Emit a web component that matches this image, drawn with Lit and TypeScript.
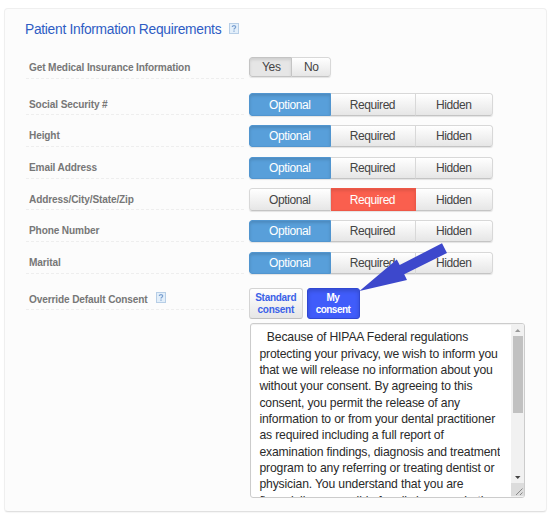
import { LitElement, html, css } from "lit";
import { customElement, property } from "lit/decorators.js";

@customElement("help-badge")
class HelpBadge extends LitElement {
  static styles = css`
    :host { display: block; width: 10px; height: 11px; }
    svg { display: block; }
  `;
  render() {
    return html`<svg width="10" height="11" viewBox="0 0 10 11">
      <rect x=".5" y=".5" width="9" height="10" fill="#e3effa" stroke="#b7cee6"/>
      <path d="M3.3 4.1C3.3 2.2 6.7 2.2 6.7 4.1C6.7 5.2 5 5.1 5 6.5M5 7.5V8.7" fill="none" stroke="#7a9fd0" stroke-width="1.2"/>
    </svg>`;
  }
}

@customElement("choice-group")
class ChoiceGroup extends LitElement {
  @property({ attribute: false }) options: string[] = [];
  @property() selected = "";
  @property() tone = "blue";
  static styles = css`
    :host { display: block; }
    .group {
      display: grid; grid-template-columns: 81.5px 85px 77.5px; width: 244px; height: 22.5px;
      box-sizing: border-box; border-radius: 3px; overflow: hidden;
      box-shadow: 0 1px 1px rgba(0,0,0,.1);
    }
    .group.two { grid-template-columns: 42.5px 39.5px; width: 82px; height: 19.5px; }
    .opt {
      box-sizing: border-box; border: 1px solid #d8d8d8; border-bottom-color: #c4c4c4; border-left-width: 0;
      display: flex; align-items: center; justify-content: center; padding: 0;
      font: 12px "Liberation Sans", Arial, sans-serif; letter-spacing: -.43px; color: #444;
      background: linear-gradient(#fff, #e6e6e6);
    }
    .opt:first-child { border-left-width: 1px; border-radius: 3px 0 0 3px; }
    .opt:last-child { border-radius: 0 3px 3px 0; }
    .two .opt { padding-left: 1px; letter-spacing: -.3px; }
    .two .opt:first-child { padding-left: 2px; }
    .blue { background: #589fda; color: #fff; border-color: #5195cf; box-shadow: inset 0 2px 3px rgba(0,0,0,.13); }
    .red { background: #fa5f4e; color: #fff; border-color: #ee5746; box-shadow: inset 0 2px 3px rgba(0,0,0,.1); }
    .grey { background: #e6e6e6; border-color: #c4c4c4; box-shadow: inset 0 2px 3px rgba(0,0,0,.1); }
  `;
  render() {
    return html`<div class="group ${this.options.length === 2 ? "two" : ""}">
      ${this.options.map((o) => html`<button class="opt ${o === this.selected ? this.tone : ""}">${o}</button>`)}
    </div>`;
  }
}

const LEVELS = ["Optional", "Required", "Hidden"];
const FIELDS = [
  { label: "Social Security #", selected: "Optional", tone: "blue" },
  { label: "Height", selected: "Optional", tone: "blue" },
  { label: "Email Address", selected: "Optional", tone: "blue" },
  { label: "Address/City/State/Zip", selected: "Required", tone: "red" },
  { label: "Phone Number", selected: "Optional", tone: "blue" },
  { label: "Marital", selected: "Optional", tone: "blue" },
];
const CONSENT = [
  "\u00a0 Because of HIPAA Federal regulations",
  "protecting your privacy, we wish to inform you",
  "that we will release no information about you",
  "without your consent. By agreeing to this",
  "consent, you permit the release of any",
  "information to or from your dental practitioner",
  "as required including a full report of",
  "examination findings, diagnosis and treatment",
  "program to any referring or treating dentist or",
  "physician. You understand that you are",
  "financially responsible for all charges whether",
];

@customElement("app-root")
class AppRoot extends LitElement {
  static styles = css`
    :host {
      display: block; position: relative; box-sizing: border-box; width: 556px; height: 519px;
      padding: 8px 0 0 4px; background: #fff; overflow: hidden;
      font-family: "Liberation Sans", Arial, sans-serif;
    }
    .card {
      box-sizing: border-box; width: 543px; height: 504px; background: #fcfcfc;
      border: 1px solid #efefef; border-bottom-color: #e0e0e0; border-radius: 4px;
      padding: 12px 0 0 21px; box-shadow: 0 1px 1px rgba(0,0,0,.04);
    }
    .title { display: flex; gap: 8px; height: 17px; margin: 0 0 19px; align-items: center; }
    .title help-badge { margin-bottom: 2px; }
    h1 {
      margin: 1px 0 0 -1px; font-size: 13.8px; letter-spacing: -.29px; line-height: 16px; font-weight: 400;
      color: #2f5cc4; white-space: nowrap;
    }
    .row { display: grid; grid-template-columns: 220px 1fr; column-gap: 3px; align-items: start; }
    .first { margin-bottom: 14.3px; height: 22px; }
    .fields { display: grid; grid-auto-rows: 22.5px; row-gap: 9.17px; }
    .label {
      box-sizing: border-box; height: 22px; padding: 0 0 .4px 3px; display: flex; align-items: center; gap: 8px;
      font-size: 10.1px; letter-spacing: -.13px; font-weight: 700; color: #777; white-space: nowrap;
      background: repeating-linear-gradient(90deg, #eee 0 3px, transparent 3px 5px) 0 100% / 100% 1px no-repeat;
    }
    .consent { margin-top: 14.2px; }
    .consent help-badge { margin-bottom: 3px; }
    .tabs { display: flex; gap: 4px; }
    .tab {
      box-sizing: border-box; width: 53.5px; height: 30.5px; border-radius: 3px; padding: 0;
      border: 1px solid #d4d4d4; border-bottom-color: #c0c0c0; background: linear-gradient(#fff, #e6e6e6);
      font: 700 10px/11.5px "Liberation Sans", Arial, sans-serif; letter-spacing: -.28px; color: #3b62e8; text-align: center;
    }
    .tab.on {
      width: 53px; letter-spacing: -.52px; color: #fff; background: #405cfa; border-color: #3048d2;
      box-shadow: inset 0 2px 4px rgba(0,0,0,.18);
    }
    .area {
      box-sizing: border-box; display: flex; justify-content: space-between; margin: 4.5px 0 0 1px; width: 275px; height: 175px;
      border: 1px solid #ccc; border-radius: 3px; background: #fff; overflow: hidden;
      box-shadow: inset 0 1px 1px rgba(0,0,0,.06);
    }
    .copy {
      padding: 5px 0 0 8.4px; font-size: 12.2px; letter-spacing: -.16px; line-height: 16.35px; color: #2a2a2a;
      height: 167.5px; overflow: hidden;
    }
    .line { white-space: pre; height: 16.35px; }
    .line:first-child { padding-left: 1px; }
    .bar { width: 13px; height: 173px; display: flex; flex-direction: column; background: #f1f1f1; }
    .bar svg { display: block; flex: none; }
    .thumb { height: 77px; margin: 0 1px 0 2px; background: #c1c1c1; }
    .space { flex: 1; }
    .pointer { position: absolute; left: 355px; top: 240px; }
  `;
  render() {
    return html`
      <section class="card">
        <div class="title"><h1>Patient Information Requirements</h1><help-badge></help-badge></div>
        <div class="row first">
          <div class="label">Get Medical Insurance Information</div>
          <choice-group .options=${["Yes", "No"]} selected="Yes" tone="grey"></choice-group>
        </div>
        <div class="fields">
          ${FIELDS.map((f) => html`<div class="row">
            <div class="label">${f.label}</div>
            <choice-group .options=${LEVELS} selected=${f.selected} tone=${f.tone}></choice-group>
          </div>`)}
        </div>
        <div class="row consent">
          <div class="label">Override Default Consent<help-badge></help-badge></div>
          <div>
            <div class="tabs">
              <button class="tab">Standard<br>consent</button>
              <button class="tab on">My<br>consent</button>
            </div>
            <div class="area">
              <div class="copy">${CONSENT.map((l) => html`<div class="line">${l}</div>`)}</div>
              <div class="bar">
                <svg width="13" height="12" viewBox="0 0 13 12"><path d="M4 8L6.75 5L9.5 8Z" fill="#999"/></svg>
                <div class="thumb"></div>
                <div class="space"></div>
                <svg width="13" height="12" viewBox="0 0 13 12"><path d="M4 5L6.75 8L9.5 5Z" fill="#444"/></svg>
                <svg width="13" height="14" viewBox="0 0 13 14"><path d="M0 0H13V13H0Z" fill="#dcdcdc"/><path d="M5 12L11.5 5.5M9 12L11.5 9.5" stroke="#888" stroke-width="1"/></svg>
              </div>
            </div>
          </div>
        </div>
      </section>
      <svg class="pointer" width="95" height="55" viewBox="355 240 95 55">
        <path d="M442 243.3L447 253L404.2 274.3L407 280L359.5 291L396.8 259.5L399.7 265Z" fill="#3d48cc"/>
      </svg>
    `;
  }
}
